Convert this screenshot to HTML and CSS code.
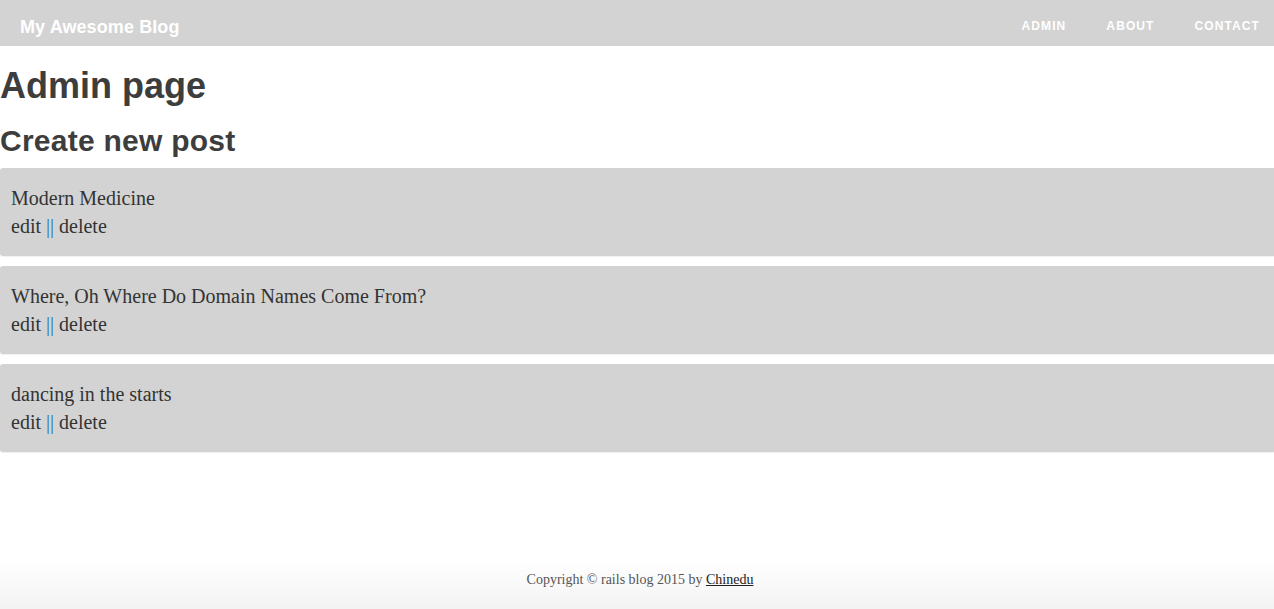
FILE: index.html
```html
<!DOCTYPE html>
<html lang="en">
<head>
<meta charset="utf-8">
<title>My Awesome Blog</title>
<link rel="stylesheet" href="styles.css">
</head>
<body>
<div class="page">
  <header class="navbar">
    <a class="brand" href="#">My Awesome Blog</a>
    <nav class="nav">
      <a href="#">Admin</a>
      <a href="#">About</a>
      <a href="#">Contact</a>
    </nav>
  </header>
  <main class="main">
    <h1 class="title">Admin page</h1>
    <h2 class="subtitle">Create new post</h2>
    <div class="post">
      <div class="post-title">Modern Medicine</div>
      <div class="post-actions"><a href="#">edit</a> <span class="sep">||</span> <a href="#">delete</a></div>
    </div>
    <div class="post">
      <div class="post-title">Where, Oh Where Do Domain Names Come From?</div>
      <div class="post-actions"><a href="#">edit</a> <span class="sep">||</span> <a href="#">delete</a></div>
    </div>
    <div class="post">
      <div class="post-title">dancing in the starts</div>
      <div class="post-actions"><a href="#">edit</a> <span class="sep">||</span> <a href="#">delete</a></div>
    </div>
  </main>
  <footer class="footer">
    Copyright © rails blog 2015 by <a href="#">Chinedu</a>
  </footer>
</div>
</body>
</html>
```
FILE: styles.css
```css
html, body {
  margin: 0;
  padding: 0;
  background: #fff;
}
.page {
  min-height: 100vh;
  display: flex;
  flex-direction: column;
  overflow: hidden;
}
.navbar {
  height: 46px;
  background: #d3d3d3;
  display: flex;
  align-items: center;
  justify-content: space-between;
  padding: 0 14px 0 20px;
}
.brand {
  font-family: "Liberation Sans", Arial, sans-serif;
  font-weight: bold;
  font-size: 18px;
  color: #fff;
  text-decoration: none;
  padding-top: 8px;
  letter-spacing: 0.1px;
}
.nav {
  display: flex;
  gap: 40px;
  padding-top: 5px;
}
.nav a {
  font-family: "Liberation Sans", Arial, sans-serif;
  font-weight: bold;
  font-size: 12px;
  letter-spacing: 1.1px;
  text-transform: uppercase;
  color: #fff;
  text-decoration: none;
}
.main {
  flex: 1;
}
.title {
  font-family: "Liberation Sans", Arial, sans-serif;
  font-weight: bold;
  font-size: 36px;
  line-height: 40px;
  color: #3d3d3d;
  margin: 20px 0 0;
}
.subtitle {
  font-family: "Liberation Sans", Arial, sans-serif;
  font-weight: bold;
  font-size: 30px;
  line-height: 33px;
  letter-spacing: 0.25px;
  color: #3d3d3d;
  margin: 18px 0 11px;
}
.post {
  background: #d3d3d3;
  border-radius: 3px 0 0 3px;
  padding: 16px 11px;
  margin-bottom: 10px;
  box-shadow: 0 1px 1px rgba(0, 0, 0, 0.06);
  font-family: "Liberation Serif", "Times New Roman", serif;
  font-size: 20px;
  line-height: 28px;
  color: #333;
}
.post a {
  color: #333;
  text-decoration: none;
}
.sep {
  color: #2a72c0;
}
.footer {
  height: 60px;
  box-sizing: border-box;
  padding: 21px 0 0 6px;
  text-align: center;
  font-family: "Liberation Serif", "Times New Roman", serif;
  font-size: 14px;
  line-height: 20px;
  color: #555;
  background: linear-gradient(to bottom, #ffffff 0%, #ffffff 20%, #f3f3f3 100%);
}
.footer a {
  color: #222;
  text-decoration: underline;
}
```
